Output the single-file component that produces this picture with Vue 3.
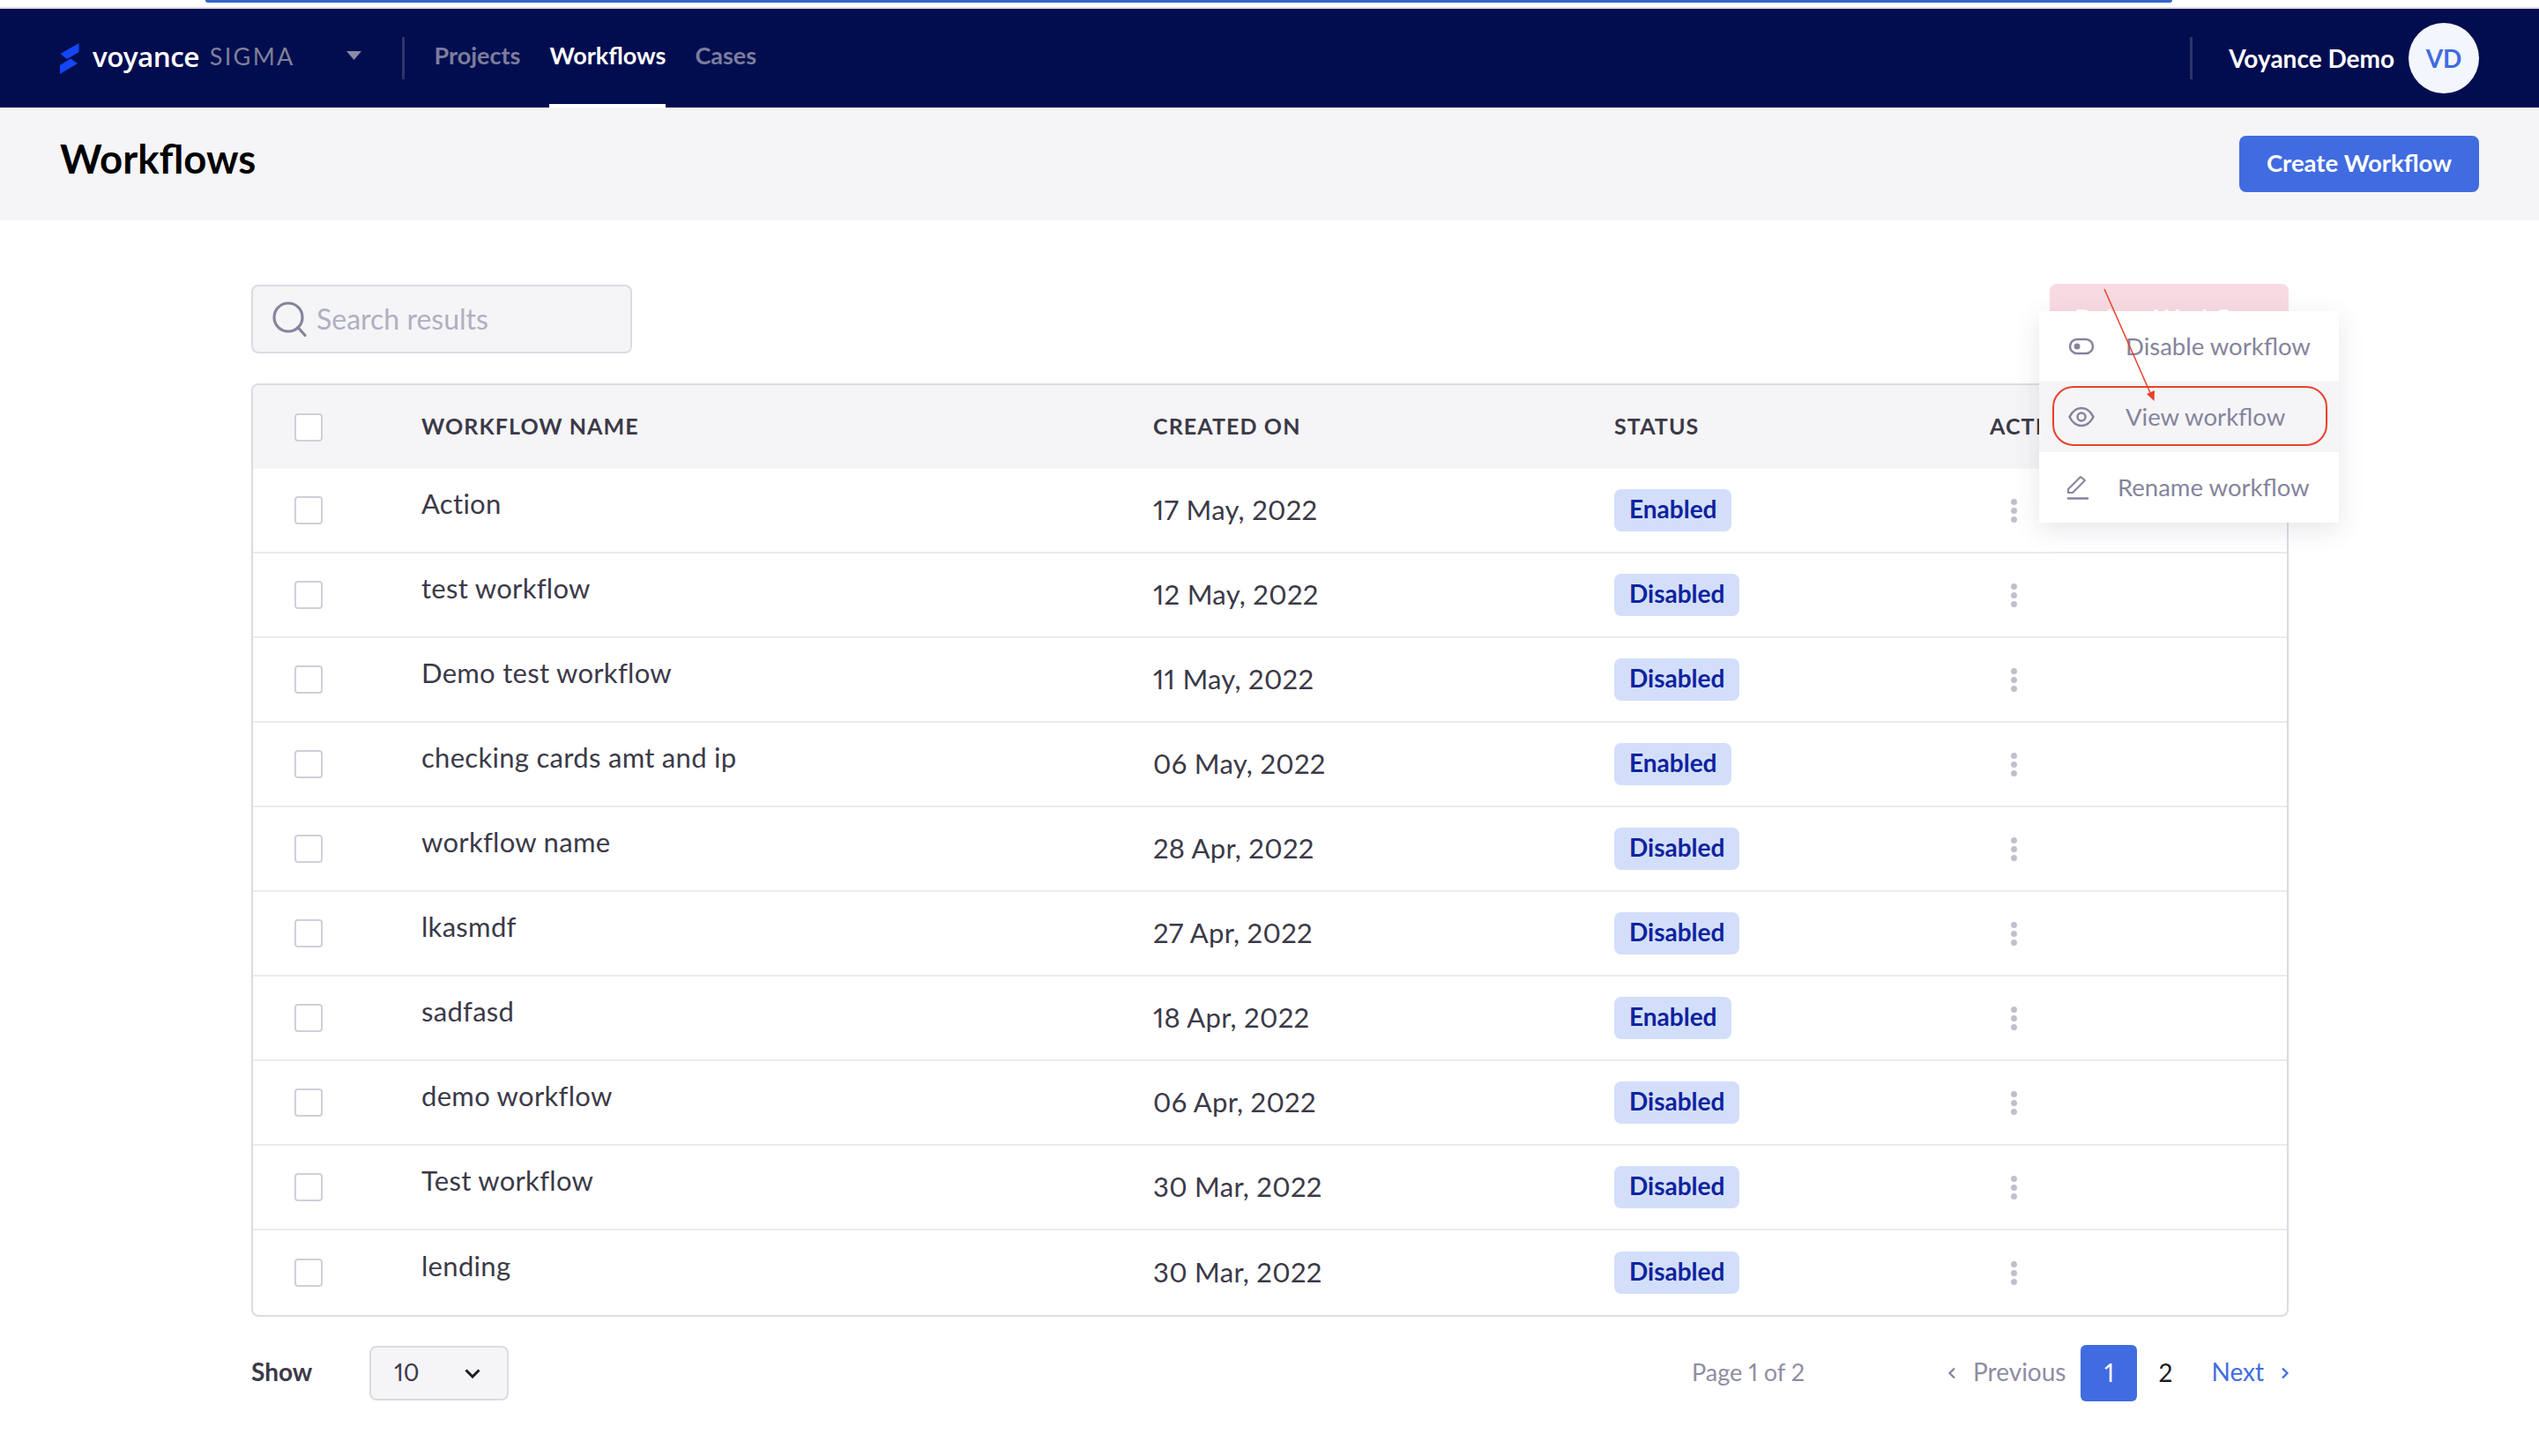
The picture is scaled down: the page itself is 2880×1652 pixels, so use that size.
<script setup>
import { ref } from 'vue';

const workflows = ref([
  { name: 'Action', created: '17 May, 2022', status: 'Enabled' },
  { name: 'test workflow', created: '12 May, 2022', status: 'Disabled' },
  { name: 'Demo test workflow', created: '11 May, 2022', status: 'Disabled' },
  { name: 'checking cards amt and ip', created: '06 May, 2022', status: 'Enabled' },
  { name: 'workflow name', created: '28 Apr, 2022', status: 'Disabled' },
  { name: 'lkasmdf', created: '27 Apr, 2022', status: 'Disabled' },
  { name: 'sadfasd', created: '18 Apr, 2022', status: 'Enabled' },
  { name: 'demo workflow', created: '06 Apr, 2022', status: 'Disabled' },
  { name: 'Test workflow', created: '30 Mar, 2022', status: 'Disabled' },
  { name: 'lending', created: '30 Mar, 2022', status: 'Disabled' }
]);
</script>

<template>
  <div class="app">
    <div class="top-strip"><div class="top-strip-bar"></div></div>

    <nav class="navbar">
      <svg class="logo" width="22" height="35" viewBox="0 0 22 35">
        <path d="M21.5 0V10L8 18L.5 12Z" fill="#1446f5" />
        <path d="M12 17.5L20 23L0 35V25Z" fill="#1446f5" />
      </svg>
      <span class="brand">voyance</span>
      <span class="brand-sub">SIGMA</span>
      <svg class="caret" width="17" height="10" viewBox="0 0 17 10">
        <path d="M0 0H17L8.5 10Z" fill="#8a8aa3" />
      </svg>
      <div class="nav-divider"></div>
      <div class="nav-links">
        <a class="nav-link">Projects</a>
        <a class="nav-link active">Workflows</a>
        <a class="nav-link">Cases</a>
      </div>
      <div class="nav-divider nav-divider-right"></div>
      <span class="user-name">Voyance Demo</span>
      <div class="avatar">VD</div>
    </nav>

    <header class="page-header">
      <h1>Workflows</h1>
      <button class="btn-create">Create Workflow</button>
    </header>

    <main class="content">
      <div class="toolbar">
        <div class="search">
          <svg width="40" height="40" viewBox="0 0 40 40" fill="none" stroke="#85849c" stroke-width="3.200">
            <circle cx="18" cy="18" r="16" />
            <path d="M29 29.500L37 38.500" stroke-linecap="round" />
          </svg>
          <span class="search-text">Search results</span>
        </div>

        <div class="actions">
          <button class="btn-delete">Delete Workflow</button>

          <!-- dropdown that lies over the table -->
          <div class="menu">
            <div class="menu-item">
              <svg width="30" height="20" viewBox="0 0 30 20" fill="none" stroke="#85849c" stroke-width="2.500">
                <rect x="2" y="2" width="26" height="16" rx="8" />
                <circle cx="10" cy="10" r="3.500" fill="#85849c" stroke="none" />
              </svg>
              <span class="menu-text">Disable workflow</span>
            </div>
            <div class="menu-item selected">
              <svg width="30" height="24" viewBox="0 0 30 24" fill="none" stroke="#85849c" stroke-width="2.500">
                <path d="M1.500 12C5 5 10 2 15 2S25 5 28.500 12C25 19 20 22 15 22S5 19 1.500 12Z" />
                <circle cx="15" cy="12" r="4.500" />
              </svg>
              <span class="menu-text">View workflow</span>
              <div class="highlight"></div>
            </div>
            <div class="menu-item">
              <svg class="pencil" width="26" height="28" viewBox="0 0 26 28" fill="none" stroke="#85849c" stroke-width="2">
                <path d="M2 20V16L16 2L21 6L7 20Z" stroke-linejoin="round" />
                <path d="M1 26.500H25" stroke-width="2.500" />
              </svg>
              <span class="menu-text rename">Rename workflow</span>
            </div>
          </div>

          <svg class="arrow" width="80" height="140" viewBox="0 0 80 140">
            <path d="M7 6L60 126" stroke="#e8412a" stroke-width="1.500" fill="none" />
            <path d="M63.500 133L55 125L64 121Z" fill="#e8412a" />
          </svg>
        </div>
      </div>

      <div class="table">
        <div class="table-row table-head">
          <span class="checkbox"></span>
          <span class="head-cell">WORKFLOW NAME</span>
          <span class="head-cell">CREATED ON</span>
          <span class="head-cell">STATUS</span>
          <span class="head-cell">ACTIONS</span>
        </div>
        <div v-for="item in workflows" :key="item.name" class="table-row">
          <span class="checkbox"></span>
          <span class="cell-name">{{ item.name }}</span>
          <span class="cell-date">{{ item.created }}</span>
          <span><span class="badge">{{ item.status }}</span></span>
          <span class="dots"><i></i><i></i><i></i></span>
        </div>
      </div>

      <div class="footer">
        <span class="show-label">Show</span>
        <div class="page-size">
          <span class="page-size-value">10</span>
          <svg width="18" height="11" viewBox="0 0 18 11" fill="none" stroke="#1c1c24" stroke-width="3">
            <path d="M1.500 1.500L9 9L16.500 1.500" />
          </svg>
        </div>
        <span class="page-of">Page 1 of 2</span>
        <div class="pager">
          <svg class="chev" width="10" height="14" viewBox="0 0 10 14" fill="none" stroke="#85849c" stroke-width="2.200">
            <path d="M8 1.500L2.500 7L8 12.500" />
          </svg>
          <span class="prev">Previous</span>
          <span class="page-num current">1</span>
          <span class="page-num">2</span>
          <span class="next">Next</span>
          <svg class="chev chev-next" width="10" height="14" viewBox="0 0 10 14" fill="none" stroke="#416be0" stroke-width="2.200">
            <path d="M2 1.500L7.500 7L2 12.500" />
          </svg>
        </div>
      </div>
    </main>
  </div>
</template>

<style scoped>
.app {
  width: 2880px;
  min-height: 1652px;
  background: #fff;
  font-family: "Lato", "Open Sans", sans-serif;
  font-variant-numeric: proportional-nums;
  color: #3b3a48;
}

.top-strip {
  height: 10px;
  border-bottom: 2px solid #dcdcdc;
  box-sizing: border-box;
  padding: 0 416px 0 233px;
}

.top-strip-bar {
  height: 3px;
  background: #3065c8;
  border-radius: 0 0 6px 6px;
}

.navbar {
  height: 112px;
  padding: 0 68px;
  display: flex;
  align-items: center;
  background: #020d50;
  color: #fff;
}

.logo {
  flex: none;
}

.brand {
  margin-left: 15px;
  margin-bottom: 5px;
  font-family: "Open Sans", sans-serif;
  font-size: 31.500px;
  font-weight: 600;
  letter-spacing: -0.6px;
}

.brand-sub {
  margin-left: 12px;
  margin-bottom: 5px;
  font-size: 27px;
  letter-spacing: 2.300px;
  color: #7f8098;
}

.caret {
  margin-left: 58px;
  margin-bottom: 6px;
}

.nav-divider {
  width: 3px;
  height: 48px;
  margin-left: 46px;
  background: #2e3569;
}

.nav-links {
  display: flex;
  align-self: stretch;
  gap: 33px;
  margin-left: 34px;
}

.nav-link {
  display: flex;
  align-items: center;
  padding-bottom: 4px;
  border-bottom: 4px solid transparent;
  font-size: 27px;
  font-weight: 700;
  color: #7c7d9c;
}

.nav-link.active {
  color: #fff;
  border-bottom-color: #fff;
}

.nav-divider-right {
  margin-left: auto;
}

.user-name {
  margin-left: 41px;
  font-size: 28px;
  font-weight: 700;
}

.avatar {
  width: 80px;
  height: 80px;
  margin-left: 16px;
  border-radius: 50%;
  display: flex;
  align-items: center;
  justify-content: center;
  background: #f3f6fd;
  color: #416be0;
  font-size: 28px;
  font-weight: 700;
}

.page-header {
  height: 128px;
  padding: 0 68px;
  display: flex;
  align-items: center;
  justify-content: space-between;
  background: #f5f5f7;
}

.page-header h1 {
  margin: 0 0 13px;
  font-size: 45.500px;
  font-weight: 700;
  color: #000;
}

.btn-create {
  width: 272px;
  height: 64px;
  padding: 0 0 3px;
  border: none;
  border-radius: 8px;
  background: #416be0;
  color: #fff;
  font-family: inherit;
  font-size: 27.500px;
  font-weight: 700;
}

.content {
  padding: 72px 284px 0 285px;
}

.toolbar {
  display: flex;
  justify-content: space-between;
  align-items: flex-start;
}

.search {
  width: 432px;
  height: 78px;
  margin-top: 1px;
  padding-left: 22px;
  box-sizing: border-box;
  display: flex;
  align-items: center;
  gap: 10px;
  background: #f5f5f7;
  border: 2px solid #dcdbe3;
  border-radius: 8px;
}

.search-text {
  margin-bottom: 2px;
  font-size: 32px;
  color: #b0afc3;
}

.actions {
  position: relative;
  width: 271px;
}

.btn-delete {
  display: block;
  width: 100%;
  height: 78px;
  border: none;
  border-radius: 8px;
  background: #f8dbe2;
  color: #fff;
  font-family: inherit;
  font-size: 28px;
  font-weight: 700;
}

.menu {
  position: absolute;
  top: 31px;
  left: -12px;
  z-index: 2;
  width: 340px;
  background: #fff;
  box-shadow: 0 8px 28px rgba(60, 60, 90, 0.12);
}

.menu-item {
  position: relative;
  height: 80px;
  padding-left: 33px;
  display: flex;
  align-items: center;
  font-size: 27.500px;
  color: #85849c;
}

.menu-item svg {
  flex: none;
}

.menu-item.selected {
  background: #f5f5f7;
}

.menu-text {
  margin-left: 35px;
  margin-bottom: 2px;
  white-space: nowrap;
}

.menu-item .pencil {
  margin-left: -2px;
}

.menu-text.rename {
  margin-left: 32px;
}

.highlight {
  position: absolute;
  top: 5px;
  left: 15px;
  width: 312px;
  height: 68px;
  box-sizing: border-box;
  border: 2px solid #e8412a;
  border-radius: 24px;
}

.arrow {
  position: absolute;
  top: 0;
  left: 55px;
  z-index: 3;
}

.table {
  margin-top: 34px;
  border: 2px solid #dcdbe3;
  border-radius: 8px;
  overflow: hidden;
}

.table-row {
  height: 96px;
  box-sizing: border-box;
  display: grid;
  grid-template-columns: 191px 830px 523px 426px 1fr;
  align-items: center;
  border-bottom: 2px solid #ebebee;
  font-size: 31px;
  letter-spacing: 0.300px;
}

.table-row:last-child {
  border-bottom: none;
}

.table-head {
  height: 95px;
  border-bottom: none;
  background: #f5f5f7;
  font-size: 25px;
  font-weight: 700;
  letter-spacing: 1.100px;
}

.head-cell {
  padding-bottom: 4px;
}

.checkbox {
  width: 32px;
  height: 32px;
  margin-left: 47px;
  box-sizing: border-box;
  background: #fff;
  border: 2px solid #d0cfdb;
  border-radius: 4px;
}

.cell-name {
  padding-bottom: 17px;
}

.cell-date {
  padding-bottom: 3px;
}

.badge {
  display: block;
  width: fit-content;
  height: 48px;
  padding: 0 17px;
  line-height: 45px;
  border-radius: 8px;
  background: #d3dffa;
  color: #0f239e;
  font-size: 28px;
  font-weight: 700;
  letter-spacing: 0;
}

.dots {
  display: flex;
  flex-direction: column;
  gap: 3px;
  margin-left: 24px;
}

.dots i {
  width: 7px;
  height: 7px;
  border-radius: 50%;
  background: #c0bfcc;
}

.footer {
  margin-top: 32px;
  display: flex;
  align-items: center;
}

.show-label {
  width: 134px;
  margin-bottom: 5px;
  font-size: 28px;
  font-weight: 700;
}

.page-size {
  width: 158px;
  height: 62px;
  box-sizing: border-box;
  padding: 0 30px 0 26px;
  display: flex;
  align-items: center;
  justify-content: space-between;
  background: #f5f5f7;
  border: 2px solid #dcdbe3;
  border-radius: 8px;
  font-size: 27px;
}

.page-size-value {
  margin-bottom: 3px;
}

.page-of {
  margin-left: auto;
  margin-right: 162px;
  margin-bottom: 4px;
  font-size: 27px;
  color: #8e8da3;
}

.pager {
  display: flex;
  align-items: center;
  margin-right: -1px;
  font-size: 28px;
}

.prev {
  margin-left: 19px;
  margin-bottom: 4px;
  color: #8e8da3;
}

.page-num {
  width: 64px;
  height: 64px;
  padding-bottom: 3px;
  box-sizing: border-box;
  display: flex;
  align-items: center;
  justify-content: center;
  color: #1c1c24;
}

.page-num.current {
  margin-left: 17px;
  border-radius: 6px;
  background: #416be0;
  color: #fff;
}

.next {
  margin-left: 20px;
  margin-bottom: 4px;
  color: #416be0;
}

.chev-next {
  margin-left: 19px;
}
</style>

<style>
body {
  margin: 0;
  background: #fff;
}
</style>
